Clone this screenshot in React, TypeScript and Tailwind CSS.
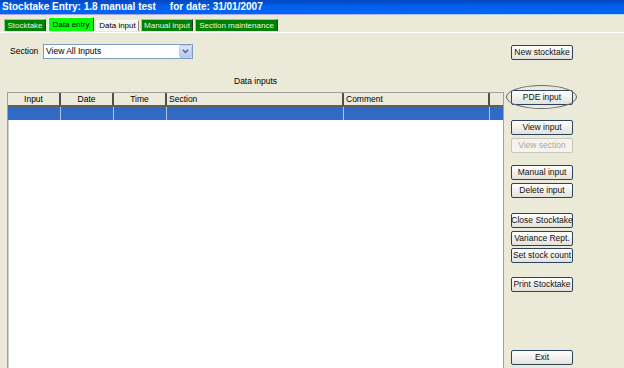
import React from "react";

// Stocktake entry window — XP style data input screen

const FONT = "font-['Liberation_Sans',Arial,sans-serif]";

function Tab({
  label,
  width,
  kind,
}: {
  label: string;
  width: string;
  kind: "green" | "active" | "plain";
}) {
  const styles = {
    green:
      "h-[12px] bg-[#008000] text-[#e6f5e6] border-t border-l border-[#8fcf8f] border-r border-r-[#204020]",
    active:
      "h-[14px] bg-[#00ff00] text-black border-t border-l border-[#f0fff0] border-r border-r-[#305030]",
    plain:
      "h-[11px] bg-[#f6f5f0] text-black border-t border-l border-[#ffffff] border-r border-r-[#8a8878]",
  }[kind];
  return (
    <div
      className={`${width} ${styles} flex items-center justify-center text-[8px] leading-none whitespace-nowrap overflow-hidden`}
    >
      {label}
    </div>
  );
}

function XpButton({
  label,
  className = "",
  disabled = false,
}: {
  label: string;
  className?: string;
  disabled?: boolean;
}) {
  return (
    <button
      type="button"
      disabled={disabled}
      className={`w-[62px] h-[15px] rounded-[2px] border flex items-center justify-center text-[8.5px] leading-none whitespace-nowrap ${
        disabled
          ? "border-[#c9c7ba] bg-[#f4f3ee] text-[#aca899]"
          : "border-[#2a4460] bg-gradient-to-b from-white to-[#e4e2da] text-[#111]"
      } ${className}`}
    >
      {label}
    </button>
  );
}

const columns = [
  { label: "Input", w: "w-[53px]", align: "justify-center" },
  { label: "Date", w: "w-[53px]", align: "justify-center" },
  { label: "Time", w: "w-[53px]", align: "justify-center" },
  { label: "Section", w: "w-[177px]", align: "justify-start pl-[2px]" },
  { label: "Comment", w: "w-[146px]", align: "justify-start pl-[2px]" },
  { label: "", w: "w-[13px]", align: "" },
];

export default function App() {
  return (
    <div
      className={`w-[624px] h-[368px] overflow-hidden bg-[#ebe9d8] ${FONT} text-black`}
    >
      {/* title bar */}
      <div className="h-[14px] bg-gradient-to-b from-[#0048c0] via-[#0060f0] to-[#0066f8] text-white font-bold text-[10px] leading-[14px] pl-[2px] whitespace-pre">
        Stocktake Entry: 1.8 manual test{"     "}for date: 31/01/2007
      </div>
      <div className="h-[1px] bg-gradient-to-r from-[#a8a8e8] via-[#a8b0e8] to-[#b0e0f0]" />

      {/* tabs */}
      <div className="h-[17px] flex items-end gap-[2px] pl-[4px] pb-[1px]">
        <Tab label="Stocktake" width="w-[42px]" kind="green" />
        <Tab label="Data entry" width="w-[46px]" kind="active" />
        <Tab label="Data input" width="w-[43px]" kind="plain" />
        <Tab label="Manual input" width="w-[52px]" kind="green" />
        <Tab label="Section maintenance" width="w-[83px]" kind="green" />
      </div>
      <div className="h-[1px] bg-white" />

      {/* body */}
      <div className="flex h-[335px]">
        <div className="w-[504px] flex flex-col">
          <div className="mt-[11px] h-[15px] flex items-center pl-[10px]">
            <span className="w-[33px] text-[8.5px]">Section</span>
            <div className="w-[150px] h-[15px] bg-white border border-[#7f9db9] flex items-center">
              <span className="flex-1 pl-[2px] text-[8.5px] leading-none">
                View All Inputs
              </span>
              <span className="w-[13px] h-[13px] rounded-[2px] bg-gradient-to-b from-[#dce8fc] to-[#b4c8f4] border border-[#b8ccf4] flex items-center justify-center">
                <svg width="7" height="5" viewBox="0 0 7 5">
                  <path
                    d="M0.8 0.8 L3.5 3.6 L6.2 0.8"
                    fill="none"
                    stroke="#4d6185"
                    strokeWidth="1.4"
                  />
                </svg>
              </span>
            </div>
          </div>

          <div className="mt-[17px] h-[11px] ml-[7px] text-center text-[8.5px] leading-[11px]">
            Data inputs
          </div>

          {/* list view */}
          <div className="mt-[5px] ml-[7px] flex-1 bg-white border-t border-l border-r border-[#a0a0a0] shadow-[inset_1px_0_0_#d4d0c8]">
            <div className="flex h-[14px] bg-[#ebeadb] border-b-2 border-[#606058]">
              {columns.map((c, i) => (
                <div
                  key={i}
                  className={`${c.w} flex items-center ${c.align} text-[8.5px] leading-none ${
                    i < 5 ? "border-r-2 border-[#505048]" : ""
                  }`}
                >
                  {c.label}
                </div>
              ))}
            </div>
            <div className="flex h-[13px] bg-[#316ac5]">
              {columns.map((c, i) => (
                <div
                  key={i}
                  className={`${c.w} ${i < 5 ? "border-r border-[#a8c8f0]" : ""}`}
                />
              ))}
            </div>
          </div>
        </div>

        {/* right button column */}
        <div className="flex-1 flex flex-col pl-[7px]">
          <XpButton label="New stocktake" className="mt-[12px]" />
          <div className="relative mt-[30px] w-[62px]">
            <XpButton label="PDE input" />
            <span className="absolute left-[-5px] top-[-5px] w-[71px] h-[24px] rounded-[50%] border border-[#6a6a6a] pointer-events-none" />
          </div>
          <XpButton label="View input" className="mt-[15px]" />
          <XpButton label="View section" className="mt-[3px]" disabled />
          <XpButton label="Manual input" className="mt-[12px]" />
          <XpButton label="Delete input" className="mt-[3px]" />
          <XpButton label="Close Stocktake" className="mt-[15px]" />
          <XpButton label="Variance Rept." className="mt-[3px]" />
          <XpButton label="Set stock count" className="mt-[2px]" />
          <XpButton label="Print Stocktake" className="mt-[14px]" />
          <XpButton label="Exit" className="mt-[58px]" />
        </div>
      </div>
    </div>
  );
}
